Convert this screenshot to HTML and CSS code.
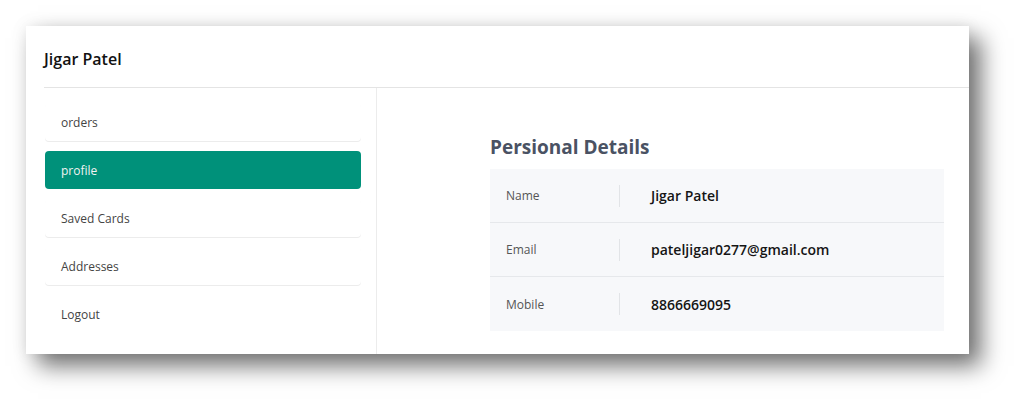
FILE: index.html
```html
<!DOCTYPE html>
<html>
<head>
<meta charset="utf-8">
<link rel="stylesheet" href="styles.css">
</head>
<body>
<div class="card">
  <div class="card-header">Jigar Patel</div>
  <div class="card-body">
    <nav class="sidebar">
      <a class="nav-item">orders</a>
      <a class="nav-item active">profile</a>
      <a class="nav-item">Saved Cards</a>
      <a class="nav-item">Addresses</a>
      <a class="nav-item last">Logout</a>
    </nav>
    <main class="content">
      <h2 class="title">Persional Details</h2>
      <div class="details">
        <div class="row"><span class="label">Name</span><span class="sep"></span><span class="value">Jigar Patel</span></div>
        <div class="row"><span class="label">Email</span><span class="sep"></span><span class="value">pateljigar0277@gmail.com</span></div>
        <div class="row"><span class="label">Mobile</span><span class="sep"></span><span class="value">8866669095</span></div>
      </div>
    </main>
  </div>
</div>
</body>
</html>
```

FILE: styles.css
```css
* { box-sizing: border-box; }
html, body { margin: 0; padding: 0; background: #fff; }
body {
  font-family: "Open Sans", "Liberation Sans", sans-serif;
  padding: 26px 0 0 26px;
  min-height: 407px;
}
.card {
  width: 943px;
  height: 328px;
  background: #fff;
  box-shadow: 12px 12px 22px rgba(0,0,0,0.55), 0 0 16px rgba(0,0,0,0.08);
  display: flex;
  flex-direction: column;
}
.card-header {
  margin-left: 18px;
  height: 62px;
  border-bottom: 1px solid #e4e4e4;
  font-size: 16px;
  font-weight: 600;
  color: #111;
  display: flex;
  align-items: center;
  padding-top: 5px;
}
.card-body {
  flex: 1;
  display: flex;
}
.sidebar {
  width: 351px;
  padding: 15px 15px 0 19px;
  border-right: 1px solid #ececec;
  display: flex;
  flex-direction: column;
  gap: 10px;
}
.nav-item {
  height: 38px;
  display: flex;
  align-items: center;
  padding-left: 16px;
  font-size: 12px;
  color: #444;
  border-radius: 4px;
  box-shadow: 0 1px 0 #ececec;
}
.nav-item.active {
  background: #00917a;
  color: #f2f2f2;
  box-shadow: none;
}
.nav-item.last { box-shadow: none; }
.content {
  flex: 1;
  padding: 45px 25px 0 113px;
}
.title {
  margin: 0 0 8px 0;
  font-size: 19px;
  line-height: 28px;
  font-weight: 700;
  color: #4a5263;
}
.details {
  background: #f7f8fa;
}
.row {
  height: 54px;
  display: flex;
  align-items: center;
  border-bottom: 1px solid #e6e8eb;
}
.row:last-child { border-bottom: none; }
.label {
  width: 129px;
  padding-left: 16px;
  font-size: 12px;
  color: #555;
}
.sep {
  width: 1px;
  height: 22px;
  background: #e2e4e7;
}
.value {
  padding-left: 31px;
  font-size: 14px;
  font-weight: 600;
  color: #151515;
}
```
